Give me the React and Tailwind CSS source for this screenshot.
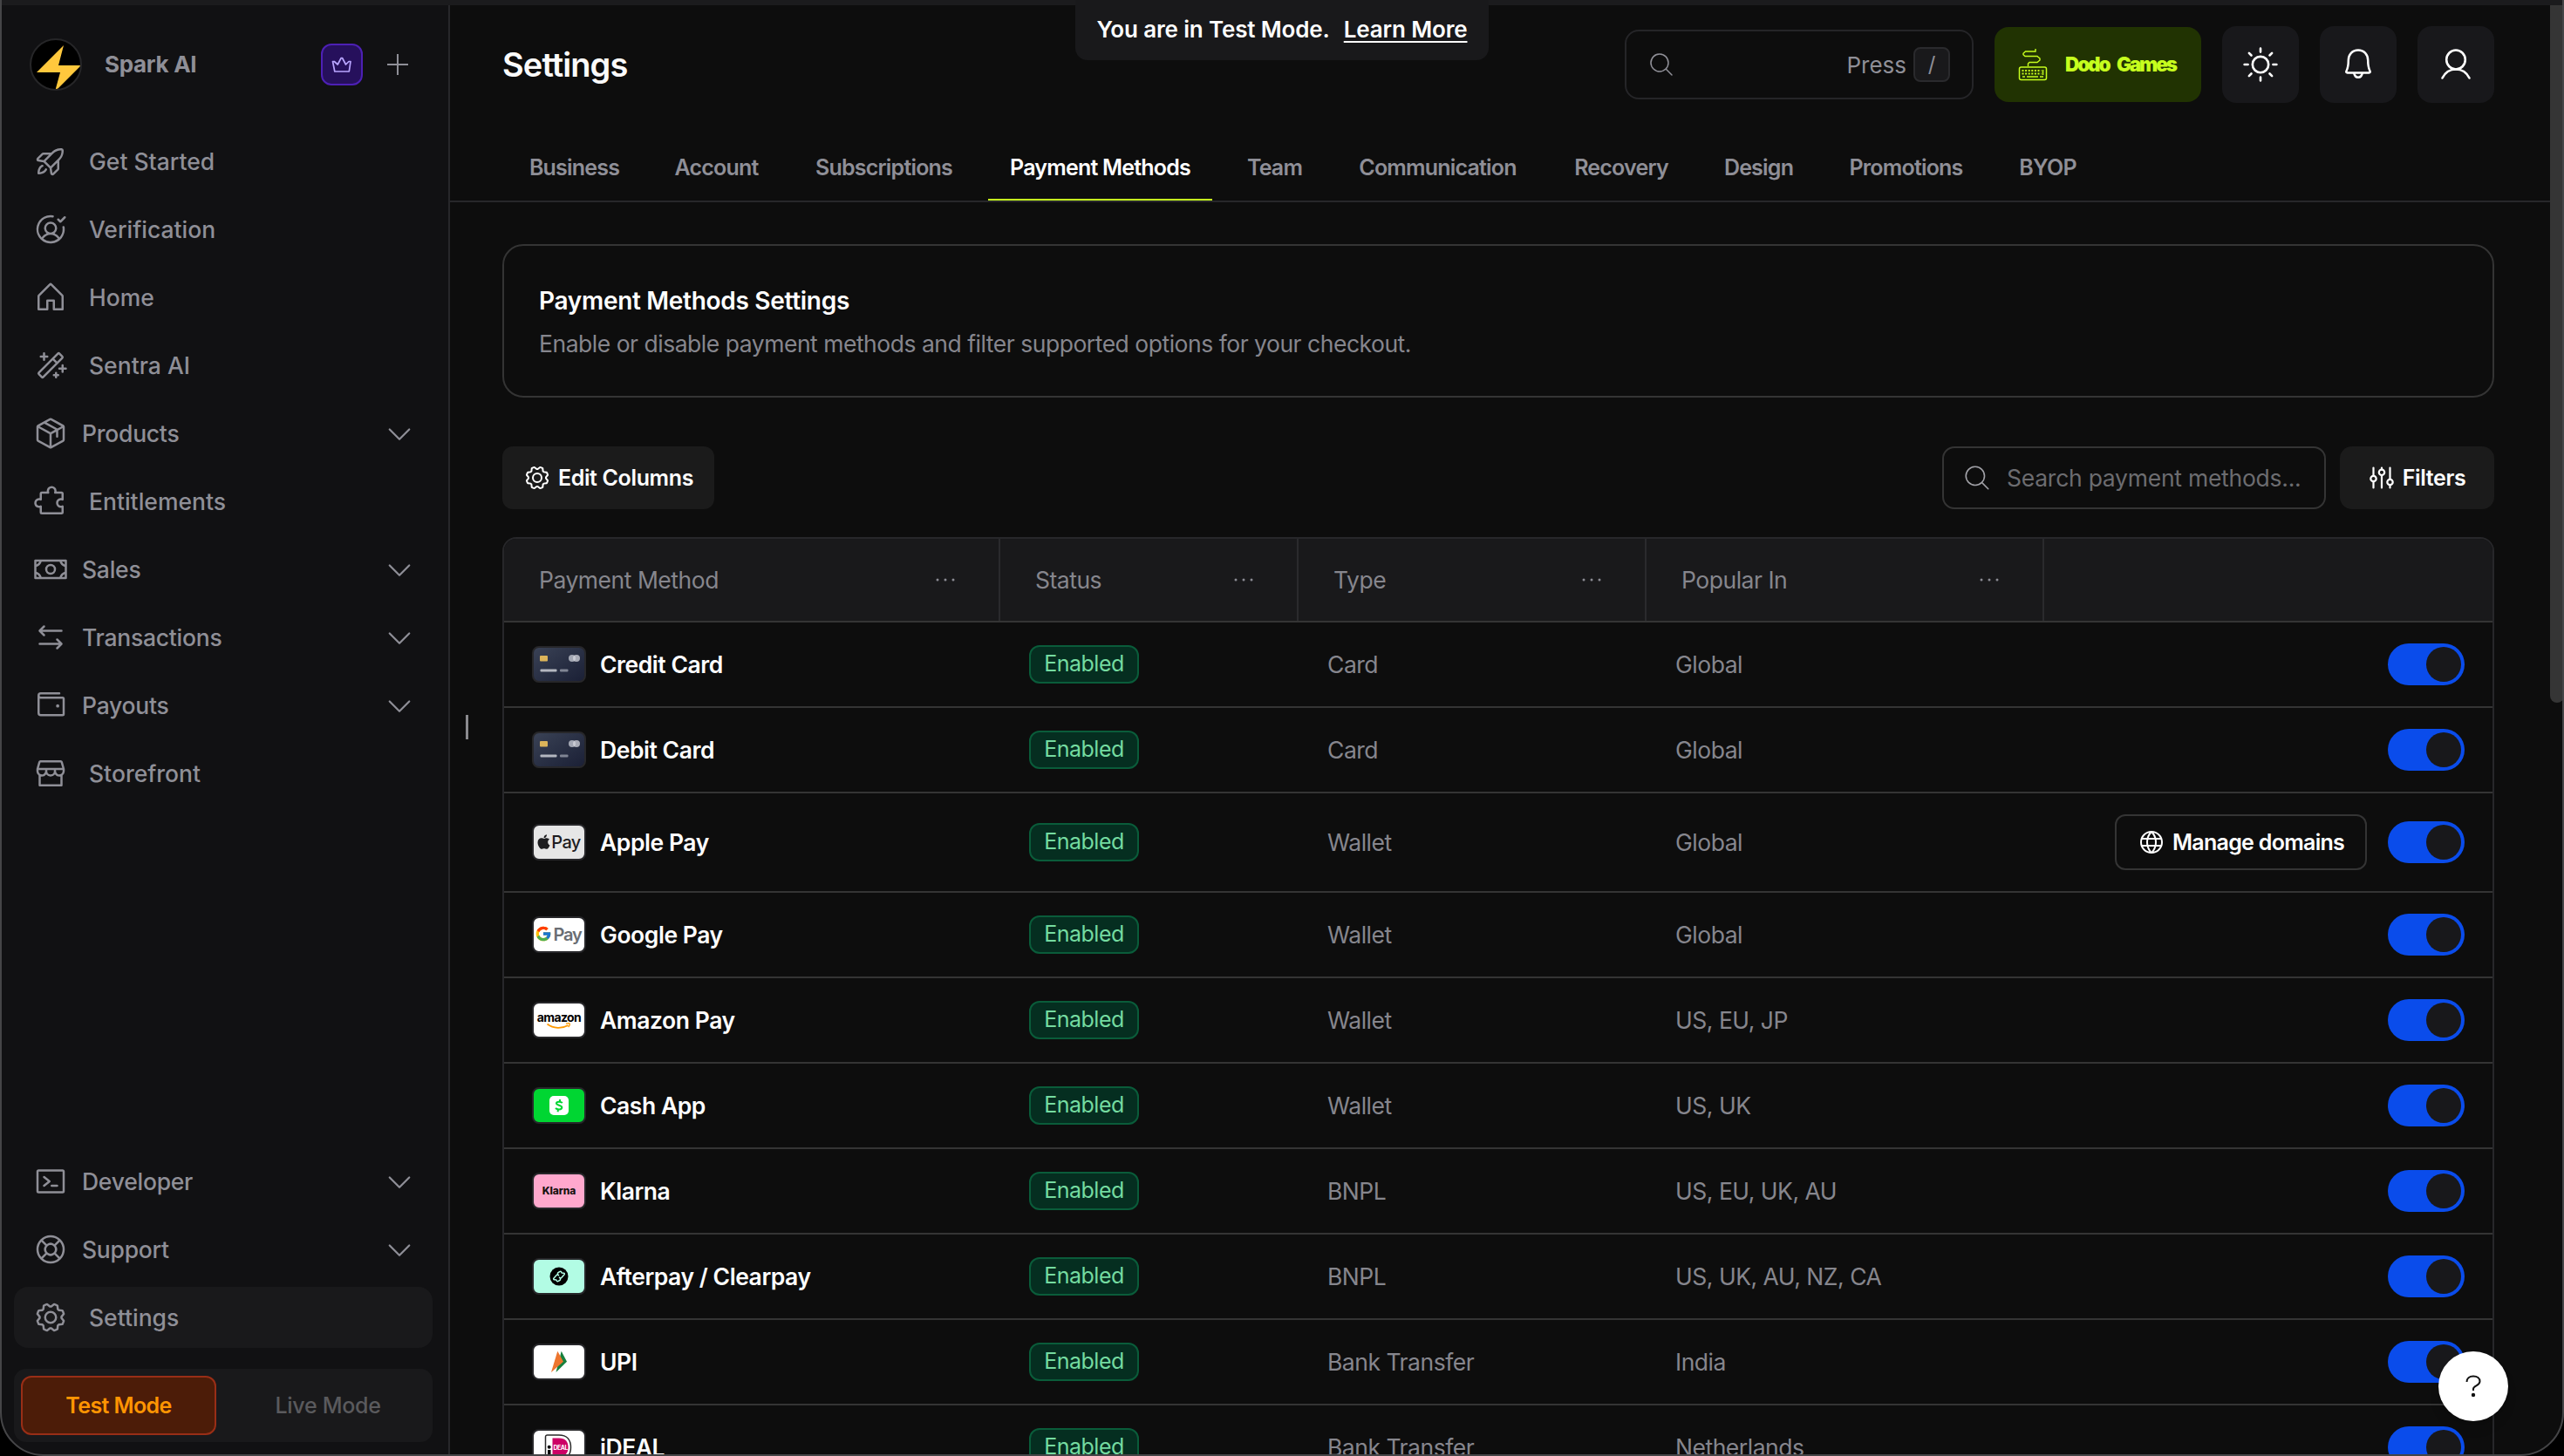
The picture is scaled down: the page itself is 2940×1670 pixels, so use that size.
import React, { useState } from 'react'
import {
  PiRocketLaunch, PiUserCircleCheck, PiHouse, PiMagicWand, PiPackage, PiPuzzlePiece, PiMoney,
  PiArrowsLeftRight, PiWallet, PiStorefront, PiTerminalWindow, PiLifebuoy, PiGear, PiCaretDown,
  PiMagnifyingGlassLight, PiSun, PiGlobe,
} from 'react-icons/pi'
import { FaApple } from 'react-icons/fa'
import { FcGoogle } from 'react-icons/fc'

const mainNav = [
  { label: 'Get Started', icon: PiRocketLaunch },
  { label: 'Verification', icon: PiUserCircleCheck },
  { label: 'Home', icon: PiHouse },
  { label: 'Sentra AI', icon: PiMagicWand },
  { label: 'Products', icon: PiPackage, open: true },
  { label: 'Entitlements', icon: PiPuzzlePiece },
  { label: 'Sales', icon: PiMoney, open: true },
  { label: 'Transactions', icon: PiArrowsLeftRight, open: true },
  { label: 'Payouts', icon: PiWallet, open: true },
  { label: 'Storefront', icon: PiStorefront },
]

const bottomNav = [
  { label: 'Developer', icon: PiTerminalWindow, open: true },
  { label: 'Support', icon: PiLifebuoy, open: true },
  { label: 'Settings', icon: PiGear, active: true },
]

const tabs = [
  { label: 'Business', width: 'w-[149px]' },
  { label: 'Account', width: 'w-[145px]' },
  { label: 'Subscriptions', width: 'w-[207px]' },
  { label: 'Payment Methods', width: 'w-[257px]', active: true },
  { label: 'Team', width: 'w-[111px]' },
  { label: 'Communication', width: 'w-[231px]' },
  { label: 'Recovery', width: 'w-[158px]' },
  { label: 'Design', width: 'w-[125px]' },
  { label: 'Promotions', width: 'w-[181px]' },
  { label: 'BYOP', width: 'w-[112px]' },
]

const methods = [
  { name: 'Credit Card', type: 'Card', popular: 'Global', logo: CardLogo, bg: 'bg-gradient-to-br from-[#3a4255] to-[#1b2036]' },
  { name: 'Debit Card', type: 'Card', popular: 'Global', logo: CardLogo, bg: 'bg-gradient-to-br from-[#3a4255] to-[#1b2036]' },
  { name: 'Apple Pay', type: 'Wallet', popular: 'Global', logo: AppleLogo, bg: 'bg-[#e6e6e6]', domains: true },
  { name: 'Google Pay', type: 'Wallet', popular: 'Global', logo: GoogleLogo, bg: 'bg-white' },
  { name: 'Amazon Pay', type: 'Wallet', popular: 'US, EU, JP', logo: AmazonLogo, bg: 'bg-white' },
  { name: 'Cash App', type: 'Wallet', popular: 'US, UK', logo: CashLogo, bg: 'bg-[#00d632]' },
  { name: 'Klarna', type: 'BNPL', popular: 'US, EU, UK, AU', logo: KlarnaLogo, bg: 'bg-[#ffa8cd]' },
  { name: 'Afterpay / Clearpay', type: 'BNPL', popular: 'US, UK, AU, NZ, CA', logo: AfterpayLogo, bg: 'bg-[#b2fce4]' },
  { name: 'UPI', type: 'Bank Transfer', popular: 'India', logo: UpiLogo, bg: 'bg-white' },
  { name: 'iDEAL', type: 'Bank Transfer', popular: 'Netherlands', logo: IdealLogo, bg: 'bg-white' },
]

function CardLogo() {
  return (
    <svg width="58" height="38" viewBox="0 0 58 38">
      <rect x="7" y="9" width="9" height="6.5" rx="1" fill="#dcb45a" />
      <circle cx="44" cy="12" r="4" fill="#a3a7b3" />
      <circle cx="49" cy="12" r="4" fill="#d5d7de" fillOpacity="0.75" />
      <rect x="7.5" y="24.5" width="19" height="3" rx="1" fill="#b4b7c0" />
      <rect x="30" y="24.5" width="9.5" height="3" rx="1" fill="#808594" />
    </svg>
  )
}

function AppleLogo() {
  return (
    <div className="flex items-center text-[#1d1d1f]">
      <FaApple size={19} className="-ml-0.5 -mt-0.5 -mr-px" />
      <span className="text-[20px] leading-none font-medium tracking-[-0.6px]">Pay</span>
    </div>
  )
}

function GoogleLogo() {
  return (
    <div className="flex items-center gap-px text-[#6a6e73]">
      <FcGoogle size={20} className="-ml-0.5 -mt-0.5" />
      <span className="text-[20px] leading-none tracking-[-1.2px]">Pay</span>
    </div>
  )
}

function AmazonLogo() {
  return (
    <div className="flex flex-col items-center">
      <span className="text-[14px] leading-[13px] font-bold tracking-[-0.6px] text-black">amazon</span>
      <svg width="30" height="8" viewBox="0 0 30 8" fill="none" stroke="#ff9900">
        <path d="M1.500 1.500c7 5.500 17 5.500 24 1.500" strokeWidth="1.800" />
        <path d="M23 1.200c2-.8 4-.7 4.200 0s-.4 2.600-1.600 3.700" strokeWidth="1.300" />
      </svg>
    </div>
  )
}

function CashLogo() {
  return (
    <div className="w-[22px] h-[22px] rounded-[5px] bg-white flex items-center justify-center">
      <svg width="12" height="16" viewBox="0 0 12 16" fill="none" stroke="#00d632" strokeWidth="2">
        <path d="M9.800 5C8.500 3.600 3 3 3 5.600 3 8.300 9.300 7.200 9.300 10.200c0 2.900-5.600 2.700-7.300.8" />
        <path d="M7.300 1 6.800 3.300M5 13l-.5 2.200" />
      </svg>
    </div>
  )
}

function KlarnaLogo() {
  return <span className="text-[12px] leading-none font-extrabold text-[#17120f] tracking-[-0.1px]">Klarna</span>
}

function AfterpayLogo() {
  return (
    <svg width="22" height="22" viewBox="0 0 22 22" fill="none">
      <circle cx="11" cy="11" r="10.5" fill="#000" />
      <path d="M9.500 9.200V7.500c0-.5.3-.8.700-1l2-1.100c.6-.3 1.100 0 1.400.5l.5 1 2.300.3c.9.100 1.200.9.700 1.600l-3.300 3.700c-.5.6-1.300.5-1.800.1l-1-.8" stroke="#b2fce4" strokeWidth="1.500" strokeLinejoin="round" />
      <path d="M12.500 12.800v1.700c0 .5-.3.8-.7 1l-2 1.100c-.6.300-1.100 0-1.400-.5l-.5-1-2.300-.3c-.9-.1-1.200-.9-.7-1.600l3.300-3.700c.5-.6 1.300-.5 1.800-.1l1 .8" stroke="#b2fce4" strokeWidth="1.500" strokeLinejoin="round" />
    </svg>
  )
}

function UpiLogo() {
  return (
    <svg width="20" height="26" viewBox="0 0 20 26">
      <path d="M12.700.7 19 12.800 6.500 25z" fill="#17803d" />
      <path d="M8.300.7 15 12.800 1 25z" fill="#ed752e" />
    </svg>
  )
}

function IdealLogo() {
  return (
    <svg width="34" height="30" viewBox="0 0 34 30">
      <path d="M3.500 1h13.500c9 0 13.500 5.500 13.500 14s-4.500 14-13.500 14H3.500A2 2 0 0 1 1.500 27V3a2 2 0 0 1 2-2z" fill="#fff" stroke="#2a2a2a" strokeWidth="1.500" />
      <path d="M9.500 4.500H17c7 0 10.500 3.700 10.500 10.500S24 25.500 17 25.500H9.500z" fill="#cc0066" />
      <circle cx="5.700" cy="14.800" r="2" fill="#000" />
      <rect x="4" y="18" width="3.500" height="8" fill="#000" />
      <text x="10.500" y="18" fontSize="7" fontWeight="700" fontFamily="Inter" fill="#fff" textLength="17">DEAL</text>
    </svg>
  )
}

function CrownIcon() {
  return (
    <svg width="24" height="20" viewBox="0 0 24 20" fill="none" stroke="#b9a5ff" strokeWidth="1.700" strokeLinejoin="round">
      <path d="M1.500 6.500h1.800L7.200 10 11.200 2.500h1.300l4 7.500L20 6.500h2L20.300 18H3.800z" />
    </svg>
  )
}

function KeyboardIcon() {
  return (
    <svg width="34" height="38" viewBox="0 0 34 38" fill="none" stroke="#c6fe1e">
      <path d="M20 1v3H8.500L6 6.200v1.600L8 9.500h14l3 2.500v2l-3 2.500H13L11.500 18v3" strokeWidth="1.400" />
      <rect x="1.500" y="22" width="31" height="14.500" rx="2" strokeWidth="1.500" />
      <path d="M4.500 26h22M4.500 29.500h22" strokeWidth="1.800" strokeDasharray="2 1.600" />
      <path d="M5 33h3M10 33h13M25 33h4M28.500 25v6" strokeWidth="1.500" />
    </svg>
  )
}

function BellIcon() {
  return (
    <svg width="32" height="38" viewBox="0 0 32 38" fill="none" stroke="currentColor" strokeWidth="2.500" strokeLinejoin="round">
      <path d="M16 2.500c-6.800 0-11.200 5-11.200 11.500C4.800 20 4 23.500 2.500 26.500c-.6 1.300 0 2 1 2h25c1 0 1.600-.7 1-2-1.500-3-2.300-6.500-2.300-12.500C27.200 7.500 22.800 2.500 16 2.500z" />
      <path d="M11.200 28.500c.5 3.500 2.400 5.200 4.800 5.200s4.300-1.700 4.800-5.200" />
    </svg>
  )
}

function PersonIcon() {
  return (
    <svg width="36" height="38" viewBox="0 0 36 38" fill="none" stroke="currentColor" strokeWidth="2.600" strokeLinecap="round">
      <ellipse cx="18" cy="13.500" rx="10.800" ry="11" />
      <path d="M2.500 34.500C5.500 28.500 11 24.500 18 24.500s12.500 4 15.500 10" />
    </svg>
  )
}

function SlidersIcon() {
  return (
    <svg width="28" height="26" viewBox="0 0 28 26" fill="none" stroke="currentColor" strokeWidth="2.200" strokeLinecap="round">
      <path d="M4.500 1.500v9M4.500 17.500v7M14 1.500v2M14 10v14.500M23.500 1.500v13M23.500 21.500v3" />
      <circle cx="4.500" cy="14" r="3.200" />
      <circle cx="14" cy="6.800" r="3.200" />
      <circle cx="23.500" cy="18" r="3.200" />
    </svg>
  )
}

function Dots() {
  return (
    <svg width="22" height="4" viewBox="0 0 22 4" fill="#8b8b93">
      <circle cx="2" cy="2" r="1.500" />
      <circle cx="11" cy="2" r="1.500" />
      <circle cx="20" cy="2" r="1.500" />
    </svg>
  )
}

function NavItem({ item }) {
  const Icon = item.icon
  return (
    <div className={item.active ? 'h-[70px] flex items-center pl-[22px] pr-5 rounded-[16px] bg-[#19191b]' : 'h-[70px] flex items-center pl-[22px] pr-5'}>
      <Icon size={40} className="shrink-0" />
      <span className={item.open ? 'ml-4 pt-0.5 tracking-[-0.25px]' : 'ml-6 pt-0.5'}>{item.label}</span>
      {item.open && <PiCaretDown size={36} className="ml-auto" />}
    </div>
  )
}

function Sidebar() {
  return (
    <div className="w-[516px] shrink-0 border-r-2 border-[#27272a] bg-[#111113] text-[#8f8f97] flex flex-col pl-4 pr-[18px] pb-4 text-[26.5px] font-medium">
      <div className="h-[76px] mt-[30px] flex items-center pl-[18px] pr-7">
        <div className="w-[60px] h-[60px] rounded-full bg-black border-2 border-[#262628] overflow-hidden flex">
          <svg width="56" height="56" viewBox="0 0 56 56">
            <path d="M37 6 6 37h27l-6 22L57 29H31z" fill="#ffc83d" />
          </svg>
        </div>
        <span className="ml-[26px] pb-px text-[26px] font-bold tracking-[-0.3px]">Spark AI</span>
        <div className="ml-auto w-12 h-12 rounded-[12px] border-2 border-[#4d20b5] bg-[#26105c] flex items-center justify-center">
          <CrownIcon />
        </div>
        <svg className="ml-7 shrink-0" width="24" height="24" viewBox="0 0 24 24" stroke="currentColor" strokeWidth="2">
          <path d="M12 0v24M0 12h24" />
        </svg>
      </div>

      <div className="mt-[38px] flex flex-col gap-2">
        {mainNav.map((item) => <NavItem key={item.label} item={item} />)}
      </div>

      <div className="mt-auto flex flex-col gap-2">
        {bottomNav.map((item) => <NavItem key={item.label} item={item} />)}
      </div>

      <div className="mt-6 h-[84px] p-2 rounded-[14px] bg-[#19191b] flex text-[25px]">
        <div className="w-[224px] rounded-[12px] border-2 border-[#992e16] bg-[#4c1c08] text-[#ff9502] font-semibold tracking-[-0.6px] flex items-center justify-center pt-0.5">Test Mode</div>
        <div className="flex-1 flex items-center justify-center pl-4 pt-0.5 tracking-[-0.3px] text-[#5a5a5d]">Live Mode</div>
      </div>
    </div>
  )
}

function Header() {
  return (
    <div className="h-[136px] pl-[60px] pr-16 flex items-center shrink-0">
      <h1 className="text-[38px] font-semibold tracking-[-0.9px] text-[#fafafa] pt-px">Settings</h1>
      <div className="ml-auto flex items-center gap-6">
        <div className="w-[400px] h-20 rounded-[16px] border-2 border-[#252528] flex items-center pl-6 pr-[25px] text-[#8f8f97]">
          <PiMagnifyingGlassLight size={32} />
          <span className="ml-auto text-[26px]">Press</span>
          <span className="ml-2 w-[42px] h-10 rounded-[8px] border-2 border-[#2a2a2d] bg-[#19191b] text-[24px] flex items-center justify-center">/</span>
        </div>
        <div className="w-[237px] h-[86px] rounded-[16px] bg-[#213302] flex items-center pl-[27px] text-[#c6fe1e]">
          <KeyboardIcon />
          <span className="ml-5 text-[22.5px] font-black tracking-[-2.1px] [word-spacing:6px] whitespace-nowrap">Dodo Games</span>
        </div>
        <div className="w-[88px] h-[88px] rounded-[16px] bg-[#18181b] text-white flex items-center justify-center"><PiSun size={42} /></div>
        <div className="w-[88px] h-[88px] rounded-[16px] bg-[#18181b] text-white flex items-center justify-center"><BellIcon /></div>
        <div className="w-[88px] h-[88px] rounded-[16px] bg-[#18181b] text-white flex items-center justify-center"><PersonIcon /></div>
      </div>
    </div>
  )
}

function HeadCell({ label }) {
  return (
    <div className="border-r-2 border-[#2a2a2d] flex items-center justify-between pl-10 pr-[50px]">
      <span className="pt-0.5">{label}</span>
      <Dots />
    </div>
  )
}

function Toggle({ on, onClick }) {
  return (
    <button onClick={onClick} className={on ? 'w-[88px] h-12 p-1 rounded-full bg-[#0a4ceb] flex justify-end' : 'w-[88px] h-12 p-1 rounded-full bg-[#2a2a2d] flex justify-start'}>
      <span className="w-10 h-10 rounded-full bg-[#18181b]" />
    </button>
  )
}

function MethodRow({ method }) {
  const [on, setOn] = useState(true)
  const Logo = method.logo
  return (
    <div className={method.domains ? 'h-[114px] grid grid-cols-[569px_342px_399px_456px_1fr] items-center border-b-2 border-[#343434]' : 'h-[98px] grid grid-cols-[569px_342px_399px_456px_1fr] items-center border-b-2 border-[#343434]'}>
      <div className="flex items-center pl-8 text-white font-semibold tracking-[-0.45px]">
        <div className={`w-[62px] h-[42px] rounded-[8px] border-2 border-[#27272a] overflow-hidden flex items-center justify-center tracking-normal ${method.bg}`}>
          <Logo />
        </div>
        <span className="ml-4 pt-0.5">{method.name}</span>
      </div>
      <div className="pl-[33px]">
        <div className="w-[126px] h-11 rounded-[12px] border-2 border-[#0a5c3a] bg-[#052e20] text-[#74dba0] text-[25px] flex items-center justify-center">Enabled</div>
      </div>
      <div className="pl-[33px] pt-0.5">{method.type}</div>
      <div className="pl-[33px] pt-0.5">{method.popular}</div>
      <div className="flex items-center justify-end gap-6 pr-8">
        {method.domains && (
          <div className="w-[289px] h-16 rounded-[12px] border-2 border-[#343434] text-white text-[25px] font-semibold flex items-center justify-center gap-2">
            <PiGlobe size={32} />
            <span className="pt-0.5 tracking-[-0.7px]">Manage domains</span>
          </div>
        )}
        <Toggle on={on} onClick={() => setOn(!on)} />
      </div>
    </div>
  )
}

function App() {
  return (
    <div className="relative w-[2940px] h-[1670px] overflow-hidden bg-[#0d0d0d] flex flex-col font-['Inter',sans-serif]">
      <div className="h-[6px] shrink-0 bg-[#1b1b1d]" />
      <div className="flex-1 min-h-0 flex">
        <Sidebar />

        <div className="flex-1 min-w-0 flex flex-col overflow-hidden mr-4">
          <Header />

          {/* settings tabs */}
          <div className="h-[90px] shrink-0 border-b-2 border-[#27272a] pl-[68px] flex gap-4 text-[25px] font-semibold tracking-[-0.8px] text-[#8f8f97]">
            {tabs.map((tab) => (
              <div key={tab.label} className={`${tab.width} shrink-0 whitespace-nowrap flex items-center justify-center pt-4 ${tab.active ? 'text-white border-b-2 border-[#c6fe1e]' : 'pb-0.5'}`}>
                {tab.label}
              </div>
            ))}
          </div>

          <div className="pl-[60px] pr-16 pt-12 text-[26.5px] tracking-[-0.48px] text-[#86868d]">
            <div className="h-[176px] rounded-[24px] border-2 border-[#343434] px-10 pt-[43px]">
              <div className="text-[28px] leading-10 font-semibold tracking-[-0.3px] text-white">Payment Methods Settings</div>
              <div className="mt-[9px] leading-10">Enable or disable payment methods and filter supported options for your checkout.</div>
            </div>

            <div className="mt-14 flex justify-between text-white text-[25px] font-semibold">
              <div className="w-[243px] h-[72px] rounded-[12px] bg-[#1b1b1b] flex items-center justify-center gap-2">
                <PiGear size={32} />
                <span className="pt-0.5 tracking-[-0.35px]">Edit Columns</span>
              </div>
              <div className="flex gap-4">
                <div className="w-[440px] h-[72px] rounded-[14px] border-2 border-[#343434] flex items-center gap-[17px] pl-[21px] text-[26.5px] tracking-[-0.25px] font-normal text-[#6c6c70]">
                  <PiMagnifyingGlassLight size={34} className="text-[#a0a0a6]" />
                  <span className="pt-0.5">Search payment methods...</span>
                </div>
                <div className="w-[177px] h-[72px] rounded-[14px] bg-[#1b1b1b] flex items-center justify-center gap-2.5 pl-px">
                  <SlidersIcon />
                  <span className="pt-0.5 tracking-[-0.35px]">Filters</span>
                </div>
              </div>
            </div>

            <div className="mt-8 border-2 border-[#27272a] rounded-t-[16px] overflow-hidden">
              <div className="h-24 grid grid-cols-[569px_342px_399px_456px_1fr] bg-[#19191b] border-b-2 border-[#343434]">
                <HeadCell label="Payment Method" />
                <HeadCell label="Status" />
                <HeadCell label="Type" />
                <HeadCell label="Popular In" />
                <div />
              </div>
              {methods.map((method) => <MethodRow key={method.name} method={method} />)}
            </div>
          </div>
        </div>
      </div>

      {/* test mode banner */}
      <div className="absolute top-0 left-[1233px] w-[474px] h-[69px] rounded-b-[14px] bg-[#19191b] text-white text-[26px] font-semibold tracking-[-0.15px] flex justify-center gap-4 pt-[14px] whitespace-nowrap">
        <span>You are in Test Mode.</span>
        <span className="underline decoration-2 underline-offset-4">Learn More</span>
      </div>

      {/* sidebar resize handle */}
      <div className="absolute left-[534px] top-[820px] w-[3px] h-7 bg-[#8a8a8e]" />

      {/* page scrollbar */}
      <div className="absolute right-0 top-[6px] w-4 h-[800px] rounded-b-full bg-[#353535]" />

      <div className="absolute left-[2796px] top-[1550px] w-20 h-20 rounded-full bg-white shadow-lg flex items-center justify-center">
        <svg width="18" height="26" viewBox="0 0 18 26" fill="none" stroke="#111" strokeWidth="2">
          <path d="M1.500 8C1.500 4 4.500 1.500 9 1.500s7.500 2.300 7.500 6c0 5-7.500 4.500-7.500 8.500v2" />
          <circle cx="9" cy="23" r="1.200" fill="#111" />
        </svg>
      </div>

      {/* window frame with rounded bottom corners */}
      <div className="absolute -top-20 inset-x-0 bottom-0 rounded-b-[50px] border-2 border-[#454547] shadow-[0_0_0_60px_#000] pointer-events-none" />
    </div>
  )
}

export default App
